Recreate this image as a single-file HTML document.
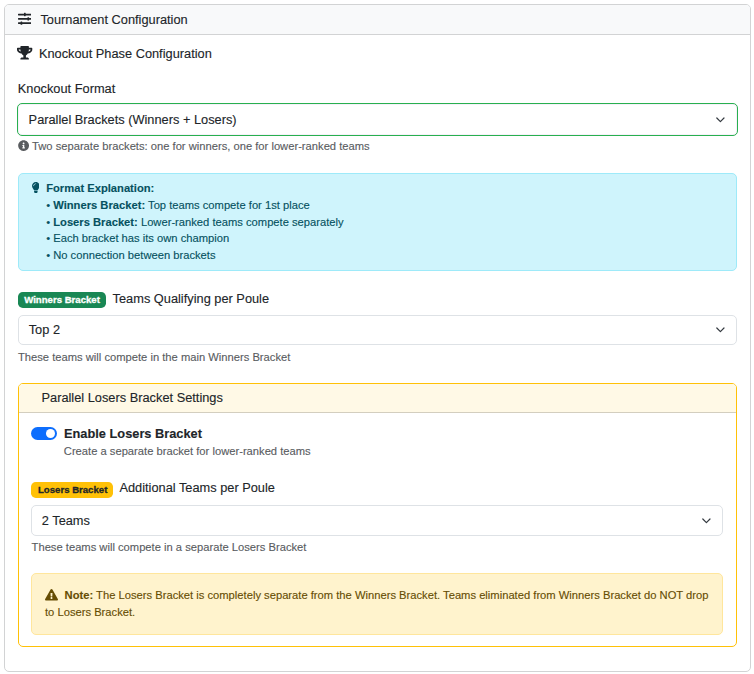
<!DOCTYPE html>
<html lang="en">
<head>
<meta charset="utf-8">
<title>Tournament Configuration</title>
<style>
*{box-sizing:border-box}
html,body{margin:0;padding:0}
body{width:754px;height:674px;background:#fff;font-family:"Liberation Sans",Arial,sans-serif;font-size:12.8px;line-height:19.2px;color:#212529;overflow:hidden;position:relative}
.a{position:absolute;white-space:nowrap;-webkit-text-stroke:0.12px currentColor}
svg{display:block}
.card{left:4px;top:4px;width:747px;height:668px;border:1px solid #d2d3d4;border-radius:5px;background:#fff}
.card-header{left:5px;top:5px;width:745px;height:30px;background:#f8f9fa;border-bottom:1px solid #d2d3d4;border-radius:4px 4px 0 0}
.select{border:1px solid #dee2e6;border-radius:5px;background:#fff;display:flex;align-items:center;padding-left:9.7px}
.select.ok{border-color:#28b04f;box-shadow:inset 0 0 0 1px #f6f1fa}
.select svg{position:absolute}
.sm{font-size:11.2px;line-height:16.8px}
.t{transform:scaleY(1.07);transform-origin:0 14px}
.st{display:inline-block;transform:scaleY(1.07);transform-origin:0 14px}
.muted{color:#595c5f}
.info{left:18px;top:173px;width:719px;height:98px;background:#cff4fc;border:1px solid #9eeaf9;border-radius:5px}
.c-info{color:#055160}
.badge{font-size:9.6px;font-weight:bold;line-height:9.6px;padding:3.36px 6.24px;border-radius:4.8px;color:#fff;height:16px;-webkit-text-stroke:0.3px currentColor}
.bg-success{background:#198754}
.bg-warning{background:#ffc107;color:#212529}
.card2{left:18px;top:383px;width:719px;height:264px;border:1px solid #ffc107;border-radius:5px}
.card2-h{left:19px;top:384px;width:717px;height:29px;background:#fff9e6;border-bottom:1px solid #d3cebf;border-radius:4px 4px 0 0}
.toggle{left:31px;top:427px;width:26px;height:13px;border-radius:6.5px;background:#0d6efd}
.toggle i{position:absolute;left:15px;top:2px;width:9px;height:9px;border-radius:50%;background:#fff}
.warn{left:31px;top:573px;width:692px;height:62px;background:#fff3cd;border:1px solid #ffe69c;border-radius:5px}
.c-warn{color:#664d03}
b{font-weight:bold}
</style>
</head>
<body>
<div class="a card"></div>
<div class="a card-header"></div>
<svg class="a" style="left:17.8px;top:12.1px" width="13.7" height="13.7" viewBox="0 0 512 512"><path fill="#212529" d="M496 384H160v-16c0-8.800-7.200-16-16-16h-32c-8.800 0-16 7.200-16 16v16H16c-8.800 0-16 7.200-16 16v32c0 8.800 7.200 16 16 16h80v16c0 8.800 7.200 16 16 16h32c8.800 0 16-7.200 16-16v-16h336c8.800 0 16-7.200 16-16v-32c0-8.800-7.200-16-16-16zm0-160h-80v-16c0-8.800-7.200-16-16-16h-32c-8.800 0-16 7.200-16 16v16H16c-8.800 0-16 7.200-16 16v32c0 8.800 7.200 16 16 16h336v16c0 8.800 7.200 16 16 16h32c8.800 0 16-7.200 16-16v-16h80c8.800 0 16-7.200 16-16v-32c0-8.800-7.200-16-16-16zm0-160H288V48c0-8.800-7.200-16-16-16h-32c-8.800 0-16 7.200-16 16v16H16C7.200 64 0 71.200 0 80v32c0 8.800 7.200 16 16 16h208v16c0 8.800 7.200 16 16 16h32c8.800 0 16-7.200 16-16v-16h208c8.800 0 16-7.200 16-16V80c0-8.800-7.200-16-16-16z"/></svg>
<div class="a t" style="left:40.4px;top:10px">Tournament Configuration</div>

<svg class="a" style="left:17.3px;top:46.2px" width="15.3" height="13.6" viewBox="0 0 576 512"><path fill="#212529" d="M552 64H448V24c0-13.300-10.700-24-24-24H152c-13.300 0-24 10.700-24 24v40H24C10.700 64 0 74.700 0 88v56c0 35.700 22.500 72.400 61.900 100.700 31.500 22.700 69.800 37.100 110 41.700C203.300 338.500 240 360 240 360v72h-48c-35.300 0-64 20.700-64 56v12c0 6.600 5.400 12 12 12h296c6.600 0 12-5.400 12-12v-12c0-35.300-28.700-56-64-56h-48v-72s36.700-21.500 68.100-73.600c40.300-4.600 78.600-19 110-41.700 39.300-28.300 61.900-65 61.900-100.700V88c0-13.300-10.700-24-24-24zM99.300 192.800C74.900 175.200 64 155.600 64 144v-16h64.200c1 32.600 5.800 61.200 12.800 86.200-15.100-5.200-29.200-12.400-41.700-21.400zM512 144c0 16.100-17.700 36.100-35.300 48.800-12.500 9-26.700 16.200-41.800 21.400 7-25 11.800-53.600 12.800-86.200H512v16z"/></svg>
<div class="a t" style="left:38.9px;top:44px">Knockout Phase Configuration</div>

<div class="a t" style="left:17.8px;top:78.5px">Knockout Format</div>
<div class="a select ok" style="left:17px;top:103px;width:721px;height:33px;padding-left:10.6px"><span class="st">Parallel Brackets (Winners + Losers)</span>
  <svg style="left:696.2px;top:10.9px" width="12.8" height="9.6" viewBox="0 0 16 12"><path fill="none" stroke="#343a40" stroke-linecap="round" stroke-linejoin="round" stroke-width="1.5" d="m3.500 3.750 4.500 4.500 4.500-4.500"/></svg>
</div>
<svg class="a" style="left:17.6px;top:140.2px" width="11.2" height="11.2" viewBox="0 0 512 512"><path fill="#595c5f" d="M256 8C119.043 8 8 119.083 8 256c0 136.997 111.043 248 248 248s248-111.003 248-248C504 119.083 392.957 8 256 8zm0 110c23.196 0 42 18.804 42 42s-18.804 42-42 42-42-18.804-42-42 18.804-42 42-42zm56 254c0 6.627-5.373 12-12 12h-88c-6.627 0-12-5.373-12-12v-24c0-6.627 5.373-12 12-12h12v-64h-12c-6.627 0-12-5.373-12-12v-24c0-6.627 5.373-12 12-12h64c6.627 0 12 5.373 12 12v100h12c6.627 0 12 5.373 12 12v24z"/></svg>
<div class="a sm muted" style="left:32px;top:137.8px">Two separate brackets: one for winners, one for lower-ranked teams</div>

<div class="a info"></div>
<svg class="a" style="left:31.6px;top:182.3px" width="7.7" height="11.2" viewBox="0 0 352 512"><path fill="#055160" d="M96.060 454.350c.01 6.290 1.870 12.450 5.360 17.690l17.090 25.690a31.990 31.990 0 0 0 26.640 14.280h61.710a31.990 31.990 0 0 0 26.640-14.280l17.090-25.690a31.989 31.989 0 0 0 5.360-17.690l.04-38.350H96.010l.05 38.350zM0 176c0 44.370 16.450 84.850 43.560 115.780 16.520 18.850 42.360 58.230 52.210 91.450.04.260.070.520.110.780h160.240c.04-.260.070-.510.110-.780 9.850-33.220 35.690-72.600 52.210-91.450C335.550 260.850 352 220.370 352 176 352 78.610 272.910-.300 175.450 0 73.440.310 0 82.970 0 176zm176-80c-44.110 0-80 35.890-80 80 0 8.840-7.160 16-16 16s-16-7.160-16-16c0-61.760 50.240-112 112-112 8.840 0 16 7.160 16 16s-7.160 16-16 16z"/></svg>
<div class="a sm c-info" style="left:46.2px;top:179.7px"><b>Format Explanation:</b></div>
<div class="a sm c-info" style="left:46.2px;top:196.7px">• <b>Winners Bracket:</b> Top teams compete for 1st place</div>
<div class="a sm c-info" style="left:46.2px;top:213.7px">• <b>Losers Bracket:</b> Lower-ranked teams compete separately</div>
<div class="a sm c-info" style="left:46.2px;top:229.7px">• Each bracket has its own champion</div>
<div class="a sm c-info" style="left:46.2px;top:246.7px">• No connection between brackets</div>

<div class="a badge bg-success" style="left:18px;top:292px;width:88px">Winners Bracket</div>
<div class="a t" style="left:112.6px;top:288.5px">Teams Qualifying per Poule</div>
<div class="a select" style="left:18px;top:315px;width:719px;height:30px"><span class="st">Top 2</span>
  <svg style="left:695.2px;top:9.1px" width="12.8" height="9.6" viewBox="0 0 16 12"><path fill="none" stroke="#343a40" stroke-linecap="round" stroke-linejoin="round" stroke-width="1.5" d="m3.500 3.750 4.500 4.500 4.500-4.500"/></svg>
</div>
<div class="a sm muted" style="left:18px;top:349px">These teams will compete in the main Winners Bracket</div>

<div class="a card2"></div>
<div class="a card2-h"></div>
<div class="a t" style="left:41.5px;top:387.7px">Parallel Losers Bracket Settings</div>
<div class="a toggle"><i></i></div>
<div class="a t" style="left:64px;top:423.5px"><b>Enable Losers Bracket</b></div>
<div class="a sm muted" style="left:63.8px;top:442.7px">Create a separate bracket for lower-ranked teams</div>

<div class="a badge bg-warning" style="left:31px;top:482px;width:82px;padding-left:7px">Losers Bracket</div>
<div class="a t" style="left:119.4px;top:478.4px">Additional Teams per Poule</div>
<div class="a select" style="left:31px;top:505px;width:692px;height:31px;padding-left:9.8px"><span class="st">2 Teams</span>
  <svg style="left:668.1px;top:10.1px" width="12.8" height="9.6" viewBox="0 0 16 12"><path fill="none" stroke="#343a40" stroke-linecap="round" stroke-linejoin="round" stroke-width="1.5" d="m3.500 3.750 4.500 4.500 4.500-4.500"/></svg>
</div>
<div class="a sm muted" style="left:31.6px;top:539px">These teams will compete in a separate Losers Bracket</div>

<div class="a warn"></div>
<svg class="a" style="left:44.9px;top:589px" width="13" height="11.5" viewBox="0 0 576 512"><path fill="#664d03" d="M569.517 440.013C587.975 472.007 564.806 512 527.940 512H48.054c-36.937 0-59.999-40.055-41.577-71.987L246.423 23.985c18.467-32.009 64.720-31.951 83.154 0l239.940 416.028zM288 354c-25.405 0-46 20.595-46 46s20.595 46 46 46 46-20.595 46-46-20.595-46-46-46zm-43.673-165.346l7.418 136c.347 6.364 5.609 11.346 11.982 11.346h48.546c6.373 0 11.635-4.982 11.982-11.346l7.418-136c.375-6.874-5.098-12.654-11.982-12.654h-63.383c-6.884 0-12.356 5.780-11.981 12.654z"/></svg>
<div class="a sm c-warn" style="left:64.6px;top:586.5px;letter-spacing:0.003px"><b>Note:</b> The Losers Bracket is completely separate from the Winners Bracket. Teams eliminated from Winners Bracket do NOT drop</div>
<div class="a sm c-warn" style="left:45px;top:604px">to Losers Bracket.</div>
</body>
</html>
